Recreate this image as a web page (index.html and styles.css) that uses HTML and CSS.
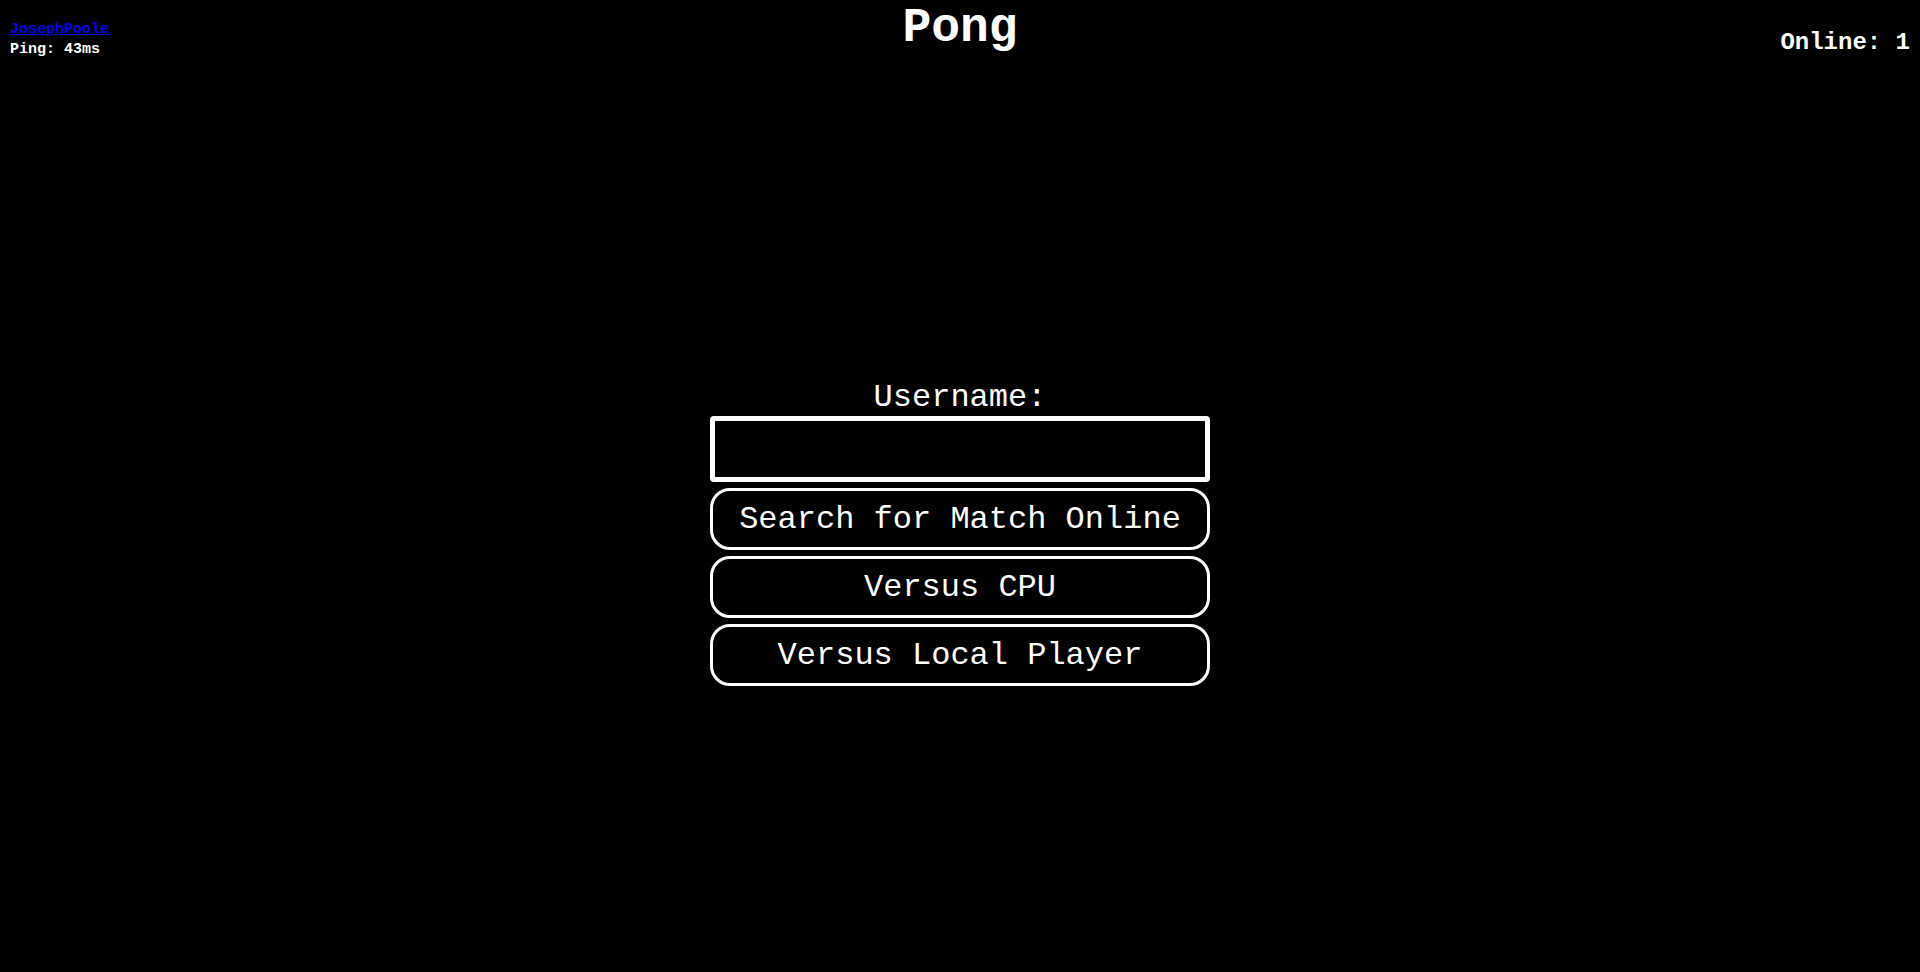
FILE: index.html
```html
<!DOCTYPE html>
<html>
<head>
<meta charset="utf-8">
<title>Pong</title>
<link rel="stylesheet" href="styles.css">
</head>
<body>
<div class="info">
  <a class="author" href="#">JosephPoole</a>
  <div class="ping">Ping: 43ms</div>
</div>
<div class="online">Online: 1</div>
<h1 class="title">Pong</h1>
<main class="menu">
  <label class="label" for="username">Username:</label>
  <input class="username" id="username" type="text">
  <button class="btn">Search for Match Online</button>
  <button class="btn">Versus CPU</button>
  <button class="btn">Versus Local Player</button>
</main>
</body>
</html>
```

FILE: styles.css
```css
html, body {
  margin: 0;
  padding: 0;
  background: #000;
  color: #fff;
  font-family: "Courier New", "Nimbus Mono PS", "Nimbus Mono L", FreeMono, "Liberation Mono", monospace;
  height: 100%;
}

.info {
  position: absolute;
  top: 20px;
  left: 10px;
  font-size: 15px;
  font-weight: bold;
  line-height: 20px;
}

.author {
  color: #0000ee;
  display: block;
  text-decoration: underline;
}

.ping {
  color: #fff;
}

.online {
  position: absolute;
  top: 29px;
  right: 10px;
  font-size: 24px;
  font-weight: bold;
}

.title {
  margin: 0;
  padding-top: 2px;
  text-align: center;
  font-size: 48px;
  line-height: 52px;
  font-weight: bold;
}

.menu {
  display: flex;
  flex-direction: column;
  align-items: center;
  padding-top: 325px;
}

.label {
  font-size: 32px;
  line-height: 37px;
}

.username {
  box-sizing: border-box;
  width: 500px;
  height: 66px;
  border: 5px solid #fff;
  border-radius: 4px;
  background: #000;
  color: #fff;
  font-family: inherit;
  font-size: 32px;
  outline: none;
  margin: 0;
}

.btn {
  box-sizing: border-box;
  width: 500px;
  height: 62px;
  margin-top: 6px;
  border: 3px solid #fff;
  border-radius: 20px;
  background: #000;
  color: #fff;
  font-family: inherit;
  font-size: 32px;
  padding: 0;
  cursor: pointer;
}
```
